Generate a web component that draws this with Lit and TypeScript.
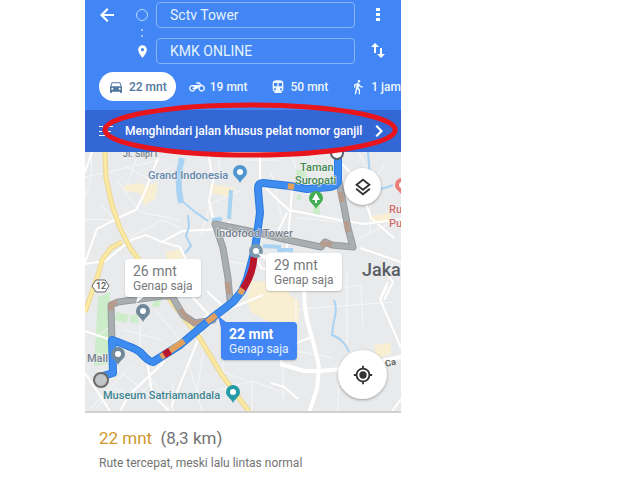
import { LitElement, html, css, svg } from "lit";
import { customElement, state } from "lit/decorators.js";

const CAR = "M18.9 6c-.2-.6-.8-1-1.4-1h-11c-.7 0-1.2.4-1.4 1L3 12v8c0 .6.4 1 1 1h1c.6 0 1-.4 1-1v-1h12v1c0 .6.4 1 1 1h1c.6 0 1-.4 1-1v-8l-2.100-6zM6.500 16c-.8 0-1.500-.7-1.500-1.500S5.700 13 6.500 13s1.500.7 1.500 1.500S7.300 16 6.500 16zm11 0c-.8 0-1.500-.7-1.500-1.500s.7-1.500 1.500-1.500 1.500.7 1.500 1.500-.7 1.500-1.500 1.500zM5 11l1.500-4.500h11L19 11H5z";
const BIKE = "M19.440 9.030L15.410 5H11v2h3.590l2 2H5c-2.800 0-5 2.200-5 5s2.200 5 5 5c2.460 0 4.450-1.690 4.900-4h1.650l2.770-2.770c-.21.540-.32 1.140-.32 1.770 0 2.800 2.200 5 5 5s5-2.200 5-5c0-2.650-1.970-4.770-4.560-4.970zM7.820 15C7.400 16.150 6.280 17 5 17c-1.630 0-3-1.370-3-3s1.370-3 3-3c1.280 0 2.400.85 2.820 2H5v2h2.820zM19 17c-1.660 0-3-1.340-3-3s1.340-3 3-3 3 1.340 3 3-1.340 3-3 3z";
const TRAIN = "M12 2c-4.420 0-8 .5-8 4v9.500C4 17.430 5.570 19 7.500 19L6 20.500V21h12v-.5L16.500 19c1.930 0 3.500-1.570 3.500-3.500V6c0-3.500-3.580-4-8-4zM7.500 17c-.83 0-1.500-.67-1.500-1.500S6.670 14 7.500 14s1.500.67 1.500 1.500S8.330 17 7.500 17zm3.500-6H6V6h5v5zm5.500 6c-.83 0-1.500-.67-1.500-1.500s.67-1.500 1.500-1.500 1.500.67 1.500 1.500-.67 1.500-1.500 1.500zm1.500-6h-5V6h5v5z";
const WALK = "M13.500 5.500c1.100 0 2-.9 2-2s-.9-2-2-2-2 .9-2 2 .9 2 2 2zM9.800 8.900L7 23h2.100l1.800-8 2.100 2v6h2v-7.500l-2.100-2 .6-3C14.800 12 16.800 13 19 13v-2c-1.900 0-3.500-1-4.300-2.400l-1-1.600c-.4-.6-1-1-1.700-1-.3 0-.5.1-.8.1L6 8.300V13h2V9.600l1.800-.7";
const PIN = "M12 2C8.100 2 5 5.100 5 9c0 5.200 7 13 7 13s7-7.800 7-13c0-3.900-3.100-7-7-7zm0 9.500a2.500 2.500 0 1 1 0-5 2.500 2.500 0 0 1 0 5z";

const glyph = (d: string) =>
  html`<svg class="glyph" viewBox="0 0 24 24" aria-hidden="true"><path d=${d}></path></svg>`;

const MODES = [
  { id: "car", label: "22 mnt", icon: CAR },
  { id: "bike", label: "19 mnt", icon: BIKE },
  { id: "train", label: "50 mnt", icon: TRAIN },
  { id: "walk", label: "1 jam", icon: WALK },
];

const marker = (x: number, y: number, fill: string, inner = "#fff") => svg`
  <path fill=${fill} d=${`M${x} ${y + 10}C${x - 2} ${y + 5} ${x - 7} ${y + 4} ${x - 7} ${y - 1}a7 7 0 0 1 14 0C${x + 7} ${y + 4} ${x + 2} ${y + 5} ${x} ${y + 10}z`}></path>
  <circle cx=${x} cy=${y - 1} r="3" fill=${inner}></circle>`;

@customElement("route-map")
export class RouteMap extends LitElement {
  static styles = css`
    :host { display: block; position: relative; overflow: hidden; background: #e9eaec; }
    .map { display: block; width: 100%; height: auto; font-family: Roboto, sans-serif; }
    .block { fill: none; stroke: #f6f7f8; stroke-width: 1; }
    .street { fill: none; stroke: #fff; stroke-width: 2; }
    .avenue { fill: none; stroke: #fff; stroke-width: 4; }
    .river { fill: none; stroke: #a9d3f3; }
    .toll-edge { fill: none; stroke: #ecd78c; stroke-width: 5; }
    .toll { fill: none; stroke: #fbe9a4; stroke-width: 3; }
    .park { fill: #cdecc9; }
    .area { fill: #f8efd2; }
    .route { fill: none; stroke-linejoin: round; stroke-linecap: round; }
    .alt-edge { stroke: #959b9f; stroke-width: 7; }
    .alt { stroke: #a9aeb1; stroke-width: 5; }
    .alt-slow { stroke: #b79b8c; stroke-width: 5; stroke-linecap: butt; }
    .main-edge { stroke: #2b7ade; stroke-width: 8; }
    .main { stroke: #3f8cf0; stroke-width: 6; }
    .slow { stroke: #e2a05c; stroke-width: 6; stroke-linecap: butt; }
    .jam { stroke: #b9152c; stroke-width: 7; stroke-linecap: butt; }
    .label { font-size: 11px; font-weight: 500; paint-order: stroke; stroke: #f2f3f4; stroke-width: 1px; }
    .blue { fill: #6488ad; }
    .grey { fill: #74808b; }
    .green { fill: #43874f; }
    .teal { fill: #3d8490; }
    .red { fill: #d06c6c; }
    .road { font-size: 9px; }
    .city { font-size: 18px; font-weight: 500; fill: #5a5f64; }
    .tiny { font-size: 9px; font-weight: 500; fill: #555; }
    .round {
      position: absolute; display: grid; place-items: center; padding: 0;
      border: 0; border-radius: 50%; background: #fff; color: #333;
      box-shadow: 0 1px 3px #0005;
    }
    .layers { right: 20px; top: 16px; width: 37px; height: 37px; }
    .locate { right: 14px; bottom: 14px; width: 49px; height: 49px; }
    .round svg { width: 22px; height: 22px; }
    .bubble {
      position: absolute; display: grid; text-align: left; border: 0; border-radius: 4px;
      padding: 4px 8px; background: #fff; color: #77797c; font: 12px/14px Roboto, sans-serif;
      box-shadow: 0 1px 2px #0003; white-space: nowrap;
    }
    .bubble strong { font-size: 14px; line-height: 16px; font-weight: 400; }
    .west { left: 40px; top: 107px; }
    .east { left: 181px; top: 101px; }
    .best { left: 136px; top: 170px; background: #4285f4; color: #e4efff; }
    .best strong { font-weight: 700; color: #fff; }
  `;

  render() {
    return html`
      <svg class="map" viewBox="85 152 316 261" role="img" aria-label="Peta rute">
        <rect x="85" y="152" width="316" height="261" fill="#e9eaec"></rect>
        <path class="park" d="M98 297l12-5v52l-2 20-14 2zM117 312l12 3-3 8-12-3zM130 316l8-2v10l-8-2zM154 299l7 1-2 8-7-2zM296 170h10v8h-9zM313 199h7v16h-7zM297 195h4v5h-4z"></path>
        <path class="area" d="M124 186l14-3 8 3 12-4-3 17-11 6-4-12-15-2zM251 281l40 2-2 12 10 5v22h-30l-18-10-4-12zM371 216l20-3-1 9-18 2zM374 345l17-2v11l-14 4zM166 252l15-3 4 8-18 6zM210 184l24 4-2 9-22-4z"></path>
        <path class="block" d="M85 177l27-6 48-11M85 220q22-2 32 2M91 152q3 32-7 46M117 180l23 32 40 8M123 165l24 13 30-13M101 205l30 32 31-17 19 8M139 152l-12 33M202 217l-25-24M219 152v28M242 190l-32 14-9 31M222 260l34 6M140 325v30M155 310l34 40M123 330l39 10M96 408l20-20 21 12 16-20 17 30M173 383v30M188 361l14 50M203 354l-6 38M223 342v30l27 10M252 380v33M218 390l35-9 33 13M283 360v40M291 350l42 8M296 298v53M320 291l41-6 2 42M347 272v75M300 309l93-7M330 205l-33-16M296 218l47 4M358 239l43-21M370 182v50M385 163l-18 31M310 152l8 22M291 152l5 17M244 160h34M271 172l12 51M359 152l11 25M338 363v48M352 391l29-24M116 322l-21 16M98 353l62 51M132 365l-42 44"></path>
        <path class="street" d="M158 158l-14 36-8 16-16 7-23 12-15 42M85 264l20-3 26-21 15-5 16 7 20-11 38-2 10-7M208 152l5 29-4 20 7 30M162 242l18 5 6 13M260 152v30l14 14 15 14 46 9 29 5 37-5M331 152l27 29 13 37 23 20M292 190l-4 50-4 25M253 251l8 17 17 3M360 248l41 14M388 282l-8 17 21 49M388 275l5 7-9 18M380 300l7-14M287 213l-9 18M184 288l24 26-9 11M207 291l20 19 36-15M85 331l29 10M165 361l-36 34-10 18M202 330l-31 77M85 373l16 24 10 16M147 361l5 31 18 21M233 322l-4 29M391 413l10-14M298 399l-14-12-13-4M92 152l-7 20M312 337l-29 11-2 15"></path>
        <path class="avenue" d="M304 289q0 22 6 42t9 36l-2 22-8 24M280 364l24 7h16l21-2 60-12"></path>
        <path class="river" stroke-width="6" d="M182 158q-6 21-1 45"></path>
        <path class="river" stroke-width="2" d="M181 200q13 12 27 21M188 215l1 12-3 9 5 10-6 7M334 300q3 8 1 16t-3 19q12 4 17 17M368 152l2 25 12 12 11-4"></path>
        <path class="river" stroke-width="4" d="M231 190l-2 29M212 220l10-1M263 246l18 1M277 250h16M194 332l-9 11"></path>
        <path class="toll-edge" d="M105 152l1 26 6 27 8 23 10 20 15 20 54 69 23 38 28 38M122 242l-11 6-9 12-4 15-13 37"></path>
        <path class="toll" d="M105 152l1 26 6 27 8 23 10 20 15 20 54 69 23 38 28 38M122 242l-11 6-9 12-4 15-13 37"></path>

        ${["alt-edge", "alt"].map((c) => svg`
          <path class="route ${c}" d="M338 178L343 202 348 228 353 247 332 245 325 242 321 247 283 239 260 233 215 224 223 248 228 278 230 300M112 343L111 305 118 302 163 296 172 296 183 315 195 323 213 320"></path>`)}
        <path class="route alt-slow" d="M340 192l2 10M346 221l2 11M332 245l-8-2-3 3M227 282l2 12M180 309l7 9 8 5 10-1M111 311v-7l6-2"></path>
        ${["main-edge", "main"].map((c) => svg`
          <path class="route ${c}" d="M338 157L338 181Q337 186 330 187L307 189 290 186 263 183Q258 183 258 189L260 213 255 249 247 279 242 291 233 302 212 318 180 345 153 362Q149 362 140 352 135 348 112 340L113 373 103 376"></path>`)}
        <path class="route slow" d="M288 186l6 1M243 288l-3 6M216 315l-9 7M184 341l-23 16"></path>
        <path class="route jam" d="M254 257q-1 17-11 32M170 351l-6 4"></path>
        <circle cx="256" cy="251" r="5" fill="#fff" stroke="#7d9aad" stroke-width="4"></circle>
        <circle cx="337" cy="153" r="6" fill="#fff" stroke="#55606b" stroke-width="2"></circle>
        <circle cx="101" cy="380" r="7" fill="#c3c4c5" stroke="#6d6a68" stroke-width="2"></circle>

        ${marker(240, 173, "#4f95cf")}
        ${marker(143, 312, "#70899a")}
        ${marker(118, 355, "#70899a")}
        ${marker(316, 199, "#43ad54", "#43ad54")}
        ${marker(233, 393, "#249ca7")}
        ${marker(402, 186, "#ea7d78")}
        <path d="M316 193l-4 7h3v3h2v-3h3z" fill="#fff"></path>
        <path d="M96 280h9l4 6-4 6h-9l-4-6z" fill="#fff" stroke="#666" stroke-width="1"></path>
        <text class="tiny" x="96" y="289">12</text>
        <text class="label grey road" x="123" y="157">Jl. Slipi I</text>
        <text class="label blue" x="148" y="179">Grand Indonesia</text>
        <text class="label grey" x="216" y="237">Indofood Tower</text>
        <text class="label green" x="300" y="171">Taman</text>
        <text class="label green" x="295" y="184">Suropati</text>
        <text class="label red" x="389" y="213">Ru</text>
        <text class="label red" x="389" y="227">Pu</text>
        <text class="label grey" x="87" y="362">Mall</text>
        <text class="label teal" x="103" y="399">Museum Satriamandala</text>
        <text class="city" x="362" y="276">Jaka</text>
        <text class="tiny" x="386" y="367" transform="rotate(-15 386 367)">Ca</text>
        <path d="M139 291h12l-15 12zM292 262l-35-9 15 13z" fill="#fff"></path>
        <path d="M230 325l-12-9 4 16z" fill="#4285f4"></path>
        <rect x="85" y="411" width="316" height="2" fill="#d0d0d0"></rect>
      </svg>
      <button class="bubble west"><strong>26 mnt</strong>Genap saja</button>
      <button class="bubble east"><strong>29 mnt</strong>Genap saja</button>
      <button class="bubble best"><strong>22 mnt</strong>Genap saja</button>
      <button class="round layers" aria-label="Lapisan peta">
        <svg viewBox="0 0 24 24" fill="none" stroke="currentColor" stroke-width="2"><path d="M12 4l7 5.500-7 5.500-7-5.500zM4.500 14l7.500 6 7.500-6"></path></svg>
      </button>
      <button class="round locate" aria-label="Lokasi saya">
        <svg viewBox="0 0 24 24" fill="none" stroke="currentColor" stroke-width="2"><circle cx="12" cy="12" r="7"></circle><circle cx="12" cy="12" r="4" fill="currentColor" stroke="none"></circle><path d="M12 2v3M12 19v3M2 12h3M19 12h3"></path></svg>
      </button>`;
  }
}

@customElement("app-root")
export class AppRoot extends LitElement {
  @state() private mode = "car";

  static styles = css`
    :host {
      display: grid; grid-template-columns: 85fr 316fr 239fr; min-height: 100vh;
      background: #fff; font-family: Roboto, sans-serif;
    }
    * { box-sizing: border-box; }
    button { font-family: inherit; }
    .phone { grid-column: 2; min-width: 0; }
    .top { background: #4285f4; color: #fff; padding: 2px 0 9px; }
    .fields { display: grid; grid-template-columns: 43px 28px 1fr 46px; row-gap: 10px; align-items: center; }
    .field {
      width: 100%; height: 26px; padding: 0 13px; border: 1px solid #85b4fb; border-radius: 4px;
      background: transparent; color: #e4f3ff; font: 14px Roboto, sans-serif; outline: 0;
    }
    .tool { display: grid; place-items: center; height: 26px; padding: 0; border: 0; background: none; color: #fff; }
    .glyph { display: block; width: 16px; height: 16px; fill: currentColor; }
    .stop { position: relative; display: grid; place-items: center; color: #fff; }
    .stop .glyph { width: 15px; height: 15px; }
    .ring { width: 12px; height: 12px; border: 1px solid #b4deff; border-radius: 50%; }
    .dots { position: absolute; top: 20px; width: 2px; height: 8px; border-top: 2px solid #9cc8ff; border-bottom: 2px solid #9cc8ff; }
    .modes { display: flex; margin-top: 8px; padding-left: 14px; overflow: hidden; }
    .mode {
      display: flex; flex: none; align-items: center; gap: 5px; height: 29px; padding: 0 9px;
      margin-right: 4px; border: 0; border-radius: 15px; background: none; color: #eef8ff;
      font-size: 12px; font-weight: 500;
    }
    .mode.active { background: #fff; color: #50789f; }
    .notice { position: relative; z-index: 1; }
    .avoid {
      display: flex; align-items: center; width: 100%; height: 42px; padding: 0 14px; border: 0;
      background: #3467d6; color: #fff; font-size: 12px; font-weight: 500; white-space: nowrap;
    }
    .avoid .glyph { flex: none; }
    .avoid .text { margin: 0 10px; }
    .circled { position: absolute; left: 5%; top: -10px; width: 95%; height: 60px; overflow: visible; pointer-events: none; }
    .summary { padding: 15px 14px 8px; color: #737373; }
    .eta { margin: 0; font-size: 17px; line-height: 20px; font-weight: 400; }
    .time { color: #d0982e; margin-right: 4px; }
    .note { margin: 8px 0 0; font-size: 12px; line-height: 14px; }
  `;

  render() {
    return html`
      <main class="phone">
        <header class="top">
          <div class="fields">
            <button class="tool" aria-label="Kembali">
              <svg class="glyph" viewBox="0 0 16 16"><path d="M8 1L1 8l7 7 1.500-1.500L5 9h10V7H5l4.500-4.500z"></path></svg>
            </button>
            <span class="stop"><span class="ring"></span><span class="dots"></span></span>
            <input class="field" aria-label="Asal" value="Sctv Tower" />
            <button class="tool" aria-label="Menu">
              <svg class="glyph" viewBox="0 0 16 16"><path d="M6 1h4v3H6zM6 6h4v3H6zM6 11h4v3H6z"></path></svg>
            </button>
            <span></span>
            <span class="stop">${glyph(PIN)}</span>
            <input class="field" aria-label="Tujuan" value="KMK ONLINE" />
            <button class="tool" aria-label="Tukar">
              <svg class="glyph" viewBox="0 0 16 16"><path d="M5 0l4 4H6v6H4V4H1zM11 15l-4-4h3V5h2v6h3z"></path></svg>
            </button>
          </div>
          <nav class="modes">
            ${MODES.map((m) => html`
              <button class="mode ${m.id === this.mode ? "active" : ""}" @click=${() => (this.mode = m.id)}>
                ${glyph(m.icon)}${m.label}
              </button>`)}
          </nav>
        </header>
        <div class="notice">
          <button class="avoid">
            <svg class="glyph" viewBox="0 0 16 16"><path d="M0 3h4v1H0zM7 3h7v1H7zM0 8h3v1H0zM7 8h5v1H7zM0 12h14v1H0z"></path></svg>
            <span class="text">Menghindari jalan khusus pelat nomor ganjil</span>
            <svg class="glyph" viewBox="0 0 16 16"><path d="M5 2l6 6-6 6-1.500-1.500L8 8 3.500 3.500z"></path></svg>
          </button>
          <svg class="circled" viewBox="0 0 300 60" preserveAspectRatio="none" aria-hidden="true">
            <ellipse cx="149" cy="30" rx="145" ry="25" fill="none" stroke="#e8161c" stroke-width="5"></ellipse>
          </svg>
        </div>
        <route-map></route-map>
        <section class="summary">
          <h1 class="eta"><span class="time">22 mnt</span> (8,3 km)</h1>
          <p class="note">Rute tercepat, meski lalu lintas normal</p>
        </section>
      </main>`;
  }
}
